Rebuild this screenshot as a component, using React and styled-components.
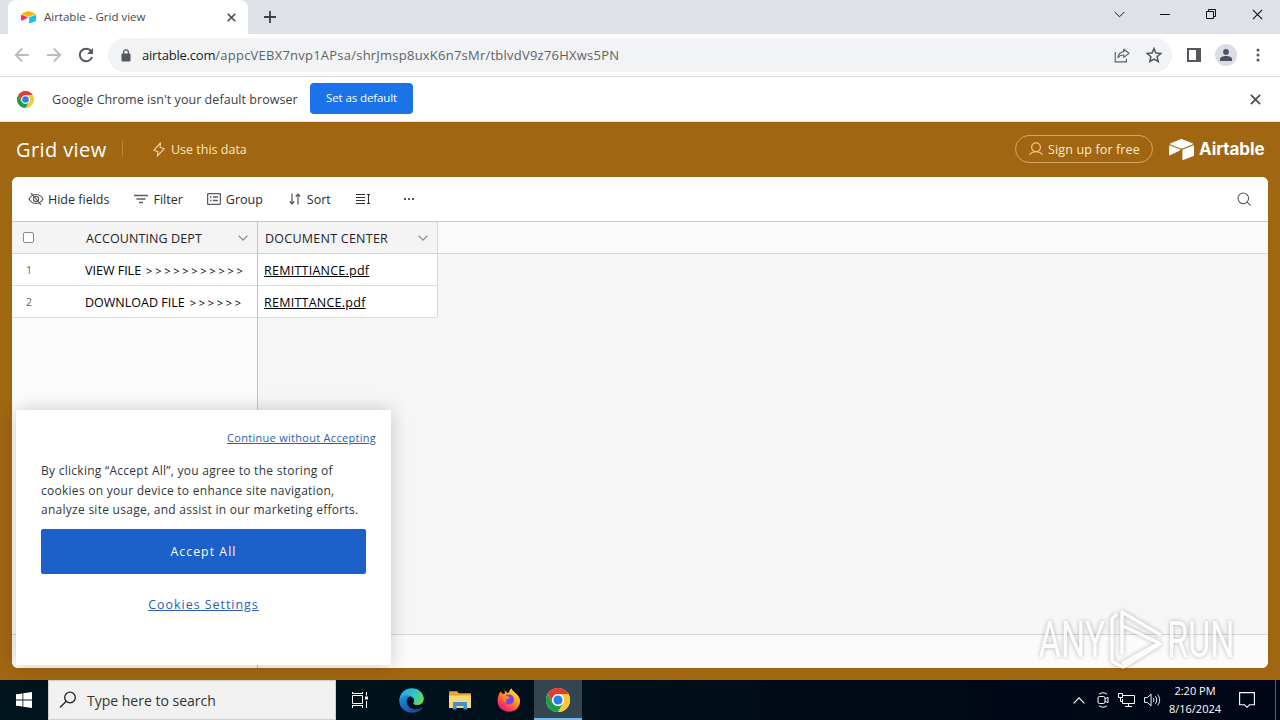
import React from 'react'
import styled, { createGlobalStyle } from 'styled-components'

const fields = [
    { id: 'dept', title: 'ACCOUNTING DEPT' },
    { id: 'doc', title: 'DOCUMENT CENTER' },
]

const records = [
    { id: 1, label: 'VIEW FILE', arrows: '>>>>>>>>>>>', file: 'REMITTIANCE.pdf' },
    { id: 2, label: 'DOWNLOAD FILE', arrows: '>>>>>>', file: 'REMITTANCE.pdf' },
]

const ChromeLogo = ({ size }) => (
    <svg width={size} height={size} viewBox="0 0 48 48">
        <circle cx="24" cy="24" r="24" fill="#fff" />
        <path d="M3.2 12A24 24 0 0 1 44.8 12H24a12 12 0 0 0-10.4 18z" fill="#e33b2e" />
        <path d="M44.8 12A24 24 0 0 1 24 48l10.4-18A12 12 0 0 0 24 12z" fill="#fcc934" />
        <path d="M24 48A24 24 0 0 1 3.2 12l10.4 18a12 12 0 0 0 20.8 0z" fill="#1e9e4a" />
        <circle cx="24" cy="24" r="11.8" fill="#fff" />
        <circle cx="24" cy="24" r="9.2" fill="#2f7de9" />
    </svg>
)

const AirtableMark = ({ width, top = '#fff', left = '#fff', right = '#fff' }) => (
    <svg width={width} height={width * 0.84} viewBox="0 0 25 21">
        <path d="M11.2.4 1.6 4.3c-.6.2-.6 1 0 1.2l9.6 3.8c.8.4 1.8.4 2.7 0l9.6-3.8c.5-.2.5-1 0-1.2L13.9.4c-.9-.4-1.9-.4-2.7 0z" fill={top} />
        <path d="M13.4 11v9.3c0 .5.4.8.9.6l10.2-4c.3-.1.5-.4.5-.6V7c0-.5-.5-.8-.9-.6l-10.2 4c-.3.1-.5.3-.5.6z" fill={right} />
        <path d="m11 11.5-3.2 1.5-6.7 3.3c-.4.2-1 0-1-.5V7.1c0-.6.7-.9 1.1-.7l9.7 3.9c.5.2.6.9.1 1.2z" fill={left} />
    </svg>
)

const Chevron = ({ width, height, weight = 1 }) => (
    <svg width={width} height={height} viewBox="0 0 10 6" fill="none" stroke="currentColor" strokeWidth={weight}>
        <path d="m.6.7 4.4 4.4L9.4.7" />
    </svg>
)

const Cross = ({ size, weight }) => (
    <svg width={size} height={size} viewBox="0 0 10 10" fill="none" stroke="currentColor" strokeWidth={weight}>
        <path d="m.8.8 8.4 8.4M9.2.8.8 9.2" />
    </svg>
)

const TabStrip = () => (
    <StyledTabStrip>
        <Tab>
            <AirtableMark width={15} top="#fcb400" left="#f82b60" right="#18bfff" />
            <TabTitle>Airtable - Grid view</TabTitle>
            <Cross size={9} weight={1.8} />
        </Tab>
        <NewTab>
            <svg width="12" height="12" viewBox="0 0 12 12" stroke="currentColor" strokeWidth="1.8">
                <path d="M6 0v12M0 6h12" />
            </svg>
        </NewTab>
        <WindowButtons>
            <WindowButton>
                <Chevron width={11} height={7} weight={0.9} />
            </WindowButton>
            <WindowButton>
                <svg width="10" height="10" viewBox="0 0 10 10" stroke="currentColor">
                    <path d="M0 5.5h10" />
                </svg>
            </WindowButton>
            <WindowButton>
                <svg width="10" height="10" viewBox="0 0 10 10" fill="none" stroke="currentColor">
                    <path d="M.5 2.5h7v7h-7zM2.5 2.5v-2h7v7h-2" />
                </svg>
            </WindowButton>
            <WindowButton>
                <Cross size={11} weight={1} />
            </WindowButton>
        </WindowButtons>
    </StyledTabStrip>
)

const AddressBar = () => (
    <StyledAddressBar>
        <NavIcon $muted>
            <svg width="16" height="16" viewBox="0 0 16 16" fill="none" stroke="currentColor" strokeWidth="1.8">
                <path d="M15 8H2M8.2 1.5 1.7 8l6.5 6.5" />
            </svg>
        </NavIcon>
        <NavIcon $muted>
            <svg width="16" height="16" viewBox="0 0 16 16" fill="none" stroke="currentColor" strokeWidth="1.8">
                <path d="M1 8h13M7.8 1.5 14.3 8l-6.5 6.5" />
            </svg>
        </NavIcon>
        <NavIcon>
            <svg width="16" height="16" viewBox="0 0 16 16" fill="none" stroke="currentColor" strokeWidth="2">
                <path d="M13.2 4.2A6.3 6.3 0 1 0 14.1 10" />
                <path d="M15 1v6H9z" fill="currentColor" stroke="none" />
            </svg>
        </NavIcon>
        <Omnibox>
            <svg width="10" height="13" viewBox="0 0 10 13" fill="none">
                <rect x=".5" y="4.5" width="9" height="8" rx="1" fill="#54585d" />
                <path d="M2.6 5V3.2a2.4 2.4 0 0 1 4.8 0V5" stroke="#54585d" strokeWidth="1.3" />
            </svg>
            <Url>
                <UrlHost>airtable.com</UrlHost>/appcVEBX7nvp1APsa/shrJmsp8uxK6n7sMr/tblvdV9z76HXws5PN
            </Url>
            <svg width="16" height="15" viewBox="0 0 16 15" fill="none" stroke="#5f6368" strokeWidth="1.2">
                <path d="M1.2 4v9.8h11.2v-3" />
                <path d="M9.8 1.2 15 5.3 9.8 9.4V7c-2.7-.1-4.5.7-5.8 2.7.3-3.2 2.2-5.5 5.8-6z" strokeLinejoin="round" />
            </svg>
            <svg width="16" height="16" viewBox="0 0 16 16" fill="none" stroke="#54585d" strokeWidth="1.5">
                <path d="m8 1.6 1.9 4.5 4.9.4-3.7 3.2 1.1 4.8L8 12l-4.2 2.5 1.1-4.8-3.7-3.2 4.9-.4z" />
            </svg>
        </Omnibox>
        <BrowserActions>
            <svg width="14" height="14" viewBox="0 0 14 14" fill="none" stroke="#54585d" strokeWidth="2">
                <path d="M1 1h12v12H1z" />
                <path d="M9 1h4v12H9z" fill="#54585d" stroke="none" />
            </svg>
            <Avatar>
                <svg width="12" height="12" viewBox="0 0 12 12" fill="#4c5163">
                    <circle cx="6" cy="2.9" r="2.9" />
                    <path d="M0 12v-1.8C0 8 3 7 6 7s6 1 6 3.2V12z" />
                </svg>
            </Avatar>
            <svg width="4" height="14" viewBox="0 0 4 14" fill="#54585d">
                <circle cx="2" cy="2" r="1.5" />
                <circle cx="2" cy="7" r="1.5" />
                <circle cx="2" cy="12" r="1.5" />
            </svg>
        </BrowserActions>
    </StyledAddressBar>
)

const GridToolbar = () => (
    <StyledGridToolbar>
        <ToolButton $gap={4} $after={25}>
            <svg width="16" height="14" viewBox="0 0 16 14" fill="none" stroke="currentColor" strokeWidth="1.2">
                <path d="M1 7c1.6-3 4-4.5 7-4.5S13.4 4 15 7c-1.6 3-4 4.5-7 4.5S2.6 10 1 7z" />
                <circle cx="8" cy="7" r="2.6" />
                <path d="m3 1.2 10 11.6" />
            </svg>
            <ToolLabel>Hide fields</ToolLabel>
        </ToolButton>
        <ToolButton $gap={5} $after={24}>
            <svg width="14" height="10" viewBox="0 0 14 10" stroke="currentColor" strokeWidth="1.3">
                <path d="M0 1.5h14M2.5 5h9M5 8.500h4" />
            </svg>
            <ToolLabel>Filter</ToolLabel>
        </ToolButton>
        <ToolButton $gap={5} $after={26}>
            <svg width="14" height="12" viewBox="0 0 14 12" fill="none" stroke="currentColor" strokeWidth="1.3">
                <rect x=".6" y=".6" width="12.8" height="10.8" rx="1" />
                <path d="M3 4h1.5M6 4h5M3 7.5h1.500M6 7.500h5" />
            </svg>
            <ToolLabel>Group</ToolLabel>
        </ToolButton>
        <ToolButton $gap={6} $after={25}>
            <svg width="12" height="12" viewBox="0 0 12 12" fill="none" stroke="currentColor" strokeWidth="1.3">
                <path d="M3 .5v10.3M.7 8.5 3 10.8l2.3-2.3M9 11.5V1.2M6.7 3.5 9 1.2l2.3 2.3" />
            </svg>
            <ToolLabel>Sort</ToolLabel>
        </ToolButton>
        <ToolButton $after={32} $dark>
            <svg width="15" height="12" viewBox="0 0 15 12" fill="none" stroke="currentColor">
                <path d="M0 1.5h9M0 4.5h9M0 7.5h9M0 10.5h9M12.5 1.5v9M11 1.5h3M11 10.5h3" />
            </svg>
        </ToolButton>
        <ToolButton $dark>
            <svg width="12" height="4" viewBox="0 0 12 4" fill="currentColor">
                <circle cx="2" cy="2" r="1.1" />
                <circle cx="6" cy="2" r="1.1" />
                <circle cx="10" cy="2" r="1.1" />
            </svg>
        </ToolButton>
        <SearchButton>
            <svg width="14" height="14" viewBox="0 0 14 14" fill="none" stroke="currentColor" strokeWidth="1.1">
                <circle cx="6.3" cy="6.3" r="5.3" />
                <path d="m10.2 10.2 3.4 3.4" />
            </svg>
        </SearchButton>
    </StyledGridToolbar>
)

const Grid = () => (
    <StyledGrid>
        <FrozenPane>
            <HeaderCell>
                <Checkbox />
                <FieldName>{fields[0].title}</FieldName>
                <Chevron width={10} height={6} weight={1.2} />
            </HeaderCell>
            {records.map(record => (
                <Row key={record.id}>
                    <RowNumber>{record.id}</RowNumber>
                    <span>{record.label}</span>
                    <Arrows>{record.arrows}</Arrows>
                </Row>
            ))}
        </FrozenPane>
        <ScrollPane>
            <HeaderStrip>
                <HeaderCell $scrolling>
                    <FieldName $wide>{fields[1].title}</FieldName>
                    <Chevron width={10} height={6} weight={1.2} />
                </HeaderCell>
            </HeaderStrip>
            {records.map(record => (
                <FileCell key={record.id}>
                    <FileLink>{record.file}</FileLink>
                </FileCell>
            ))}
        </ScrollPane>
    </StyledGrid>
)

const CookieBanner = () => (
    <StyledCookieBanner>
        <ContinueLink>Continue without Accepting</ContinueLink>
        <CookieText>
            By clicking “Accept All”, you agree to the storing of
            <br />
            cookies on your device to enhance site navigation,
            <br />
            analyze site usage, and assist in our marketing efforts.
        </CookieText>
        <AcceptButton>Accept All</AcceptButton>
        <SettingsLink>Cookies Settings</SettingsLink>
    </StyledCookieBanner>
)

const Watermark = () => (
    <StyledWatermark>
        <WatermarkWord>ANY</WatermarkWord>
        <PlayMark width="60" height="66" viewBox="0 0 60 66" fill="none" stroke="#fff" strokeWidth="3.5" strokeLinejoin="round" strokeLinecap="round">
            <path d="M6 54V13l4-4" />
            <path d="M16 47V6l38 22.5" />
            <path d="m17 20 36 17-36 20" />
            <path d="m7 56 10 5 37-23" />
        </PlayMark>
        <WatermarkWord>RUN</WatermarkWord>
    </StyledWatermark>
)

const EdgeLogo = () => (
    <svg width="25" height="25" viewBox="0 0 24 24">
        <defs>
            <linearGradient id="edgeTop" x1="0" y1=".3" x2="1" y2=".6">
                <stop offset="0" stopColor="#27a5e0" />
                <stop offset=".55" stopColor="#2fc3c9" />
                <stop offset="1" stopColor="#6edb57" />
            </linearGradient>
            <linearGradient id="edgeBody" x1="0" y1="0" x2=".4" y2="1">
                <stop offset="0" stopColor="#1b95dd" />
                <stop offset="1" stopColor="#1254a8" />
            </linearGradient>
        </defs>
        <path d="M.3 12.5C.3 5.5 5.5.3 12.2.3 19 .3 23.8 5 23.8 10.3c0 3.6-2.7 6-6 6-2.8 0-4.3-1-4-2 1.300-1.400 1.200-4.600-1.800-6C8 6.500 2.500 8 .3 12.500z" fill="url(#edgeTop)" />
        <path d="M.3 12.5C1.5 7.5 8 5.8 11.6 8.2 8.5 8.4 7 11 7.5 14c.6 4.2 5 7.3 9.5 6.5 2-.3 3.5-1 4.8-1.9.5-.3.9.1.6.6-2.1 3-5.9 4.6-9.9 4.6C5.5 23.8.3 18.6.3 12.5z" fill="url(#edgeBody)" />
    </svg>
)

const FolderIcon = () => (
    <svg width="22" height="19" viewBox="0 0 22 19">
        <path d="M0 1.5C0 .7.5.3 1.2.3H8l2 2h11c.6 0 1 .4 1 1V6H0z" fill="#e8a33d" />
        <path d="M0 4.5h22V17H0z" fill="#fbd775" />
        <path d="M4 18.5V12c0-.7.4-1 1-1h12c.6 0 1 .3 1 1v6.5h-3.500V15h-7v3.500z" fill="#3f92d2" />
    </svg>
)

const FirefoxLogo = () => (
    <svg width="24" height="24" viewBox="0 0 24 24">
        <defs>
            <linearGradient id="fox" x1=".85" y1=".05" x2=".2" y2=".95">
                <stop offset="0" stopColor="#fff04a" />
                <stop offset=".4" stopColor="#ff9a1f" />
                <stop offset=".75" stopColor="#ff4250" />
                <stop offset="1" stopColor="#e31587" />
            </linearGradient>
        </defs>
        <path d="M3.5 3.5 5.8 6 8 5.5l-.5-3.200 3.500 3C12.500 3.500 13 1.500 14.500.3c.5 2.200 2 3 4.500 5.200 3 2.700 4.500 5.500 4 9-.8 5.500-5.200 9.300-11 9.300S.8 19.500.6 13.500C.5 9.500 1.500 6 3.500 3.500z" fill="url(#fox)" />
        <circle cx="12" cy="11.5" r="5" fill="#7542e5" />
        <path d="M5.5 8.5c3-1.500 6 0 7.500 1.200-1 1-2.500.8-3.500 1.800-.6.7-.5 2 .6 2.700-3 .5-5-2.200-4.600-5.700z" fill="#ff8a2a" />
    </svg>
)

const Taskbar = () => (
    <StyledTaskbar>
        <TaskButton>
            <svg width="16" height="16" viewBox="0 0 16 16" fill="#fff">
                <path d="M0 2.3 6.5 1.4v6.2H0zM7.3 1.3 16 0v7.6H7.3zM0 8.4h6.5v6.2L0 13.7zM7.3 8.4H16V16l-8.7-1.3z" />
            </svg>
        </TaskButton>
        <TaskSearch>
            <svg width="18" height="18" viewBox="0 0 18 18" fill="none" stroke="#222" strokeWidth="1.3">
                <circle cx="11" cy="6.5" r="5.3" />
                <path d="M7.2 10.3 1 16.5" />
            </svg>
            <TaskSearchText>Type here to search</TaskSearchText>
        </TaskSearch>
        <TaskButton>
            <svg width="18" height="18" viewBox="0 0 18 18" fill="none" stroke="#fff">
                <path d="M1.5 4.5h10v8h-10zM1.5 1v2M11.5 1v2M1.5 2.5h10M1.5 14v3M11.5 14v3M1.5 14.5h10M15.5 1v3.5M15.5 10v7" />
                <path d="M14 5.5h3v3h-3z" fill="#fff" stroke="none" />
            </svg>
        </TaskButton>
        <TaskApps>
            <TaskButton>
                <EdgeLogo />
            </TaskButton>
            <TaskButton>
                <FolderIcon />
            </TaskButton>
            <TaskButton>
                <FirefoxLogo />
            </TaskButton>
            <TaskButton $active>
                <ChromeLogo size={24} />
            </TaskButton>
        </TaskApps>
        <Tray>
            <svg width="12" height="7" viewBox="0 0 12 7" fill="none" stroke="#fff" strokeWidth="1.2">
                <path d="m.6 6.3 5.4-5.4 5.4 5.4" />
            </svg>
            <svg width="12" height="16" viewBox="0 0 12 16" fill="none" stroke="#fff">
                <path d="M2 2.2C4.5.3 7.5.3 10 2.2M2 13.8c2.5 1.9 5.5 1.9 8 0" />
                <rect x="1" y="4.5" width="7" height="7" rx="1.5" />
                <path d="m8 7 3-1.7v5.4L8 9" />
            </svg>
            <svg width="17" height="14" viewBox="0 0 17 14" fill="none" stroke="#fff">
                <path d="M5 2.5h11.5v8h-12V6M10.5 10.5v3M7 13.5h7M.5.5h4v4h-4zM2.5 4.5v4h2" />
            </svg>
            <svg width="17" height="14" viewBox="0 0 18 14" fill="none" stroke="#fff">
                <path d="M.5 4.5h3l4-3.7v12.4l-4-3.7h-3zM9.7 4.8c1 1.2 1 3.2 0 4.4M12 3c2 2.2 2 5.8 0 8M14.3 1.2c3 3.3 3 8.3 0 11.6" />
            </svg>
            <Clock>
                <span>2:20 PM</span>
                <span>8/16/2024</span>
            </Clock>
            <svg width="16" height="16" viewBox="0 0 16 16" fill="none" stroke="#fff" strokeWidth="1.1">
                <path d="M.6.6h14.8v12.2h-4.9L8 15.3l-2.5-2.5H.6z" />
            </svg>
            <ShowDesktop />
        </Tray>
    </StyledTaskbar>
)

const App = () => (
    <Screen>
        <GlobalStyle />
        <TabStrip />
        <AddressBar />
        <InfoBar>
            <ChromeLogo size={17} />
            <InfoText>Google Chrome isn&apos;t your default browser</InfoText>
            <DefaultButton>Set as default</DefaultButton>
            <InfoClose>
                <Cross size={11} weight={1.8} />
            </InfoClose>
        </InfoBar>
        <Page>
            <PageHeader>
                <ViewTitle>Grid view</ViewTitle>
                <UseData>
                    <svg width="12" height="15" viewBox="0 0 12 15" fill="none" stroke="#ffd9a0" strokeWidth="1.1" strokeLinejoin="round">
                        <path d="M7.5.8.8 8.3 5 9.8l-.8 4.4 7-7.4L7 5.3z" />
                    </svg>
                    Use this data
                </UseData>
                <SignUp>
                    <svg width="14" height="14" viewBox="0 0 14 14" fill="none" stroke="#f0c283" strokeWidth="1.2">
                        <circle cx="7" cy="5.3" r="4.4" />
                        <path d="M.6 13c1.2-2.2 3.2-3.3 6.4-3.3s5.2 1.1 6.4 3.3" />
                    </svg>
                    Sign up for free
                </SignUp>
                <Brand>
                    <AirtableMark width={25} />
                    Airtable
                </Brand>
            </PageHeader>
            <Panel>
                <GridToolbar />
                <Grid />
                <Summary>
                    <SummaryDivider />
                </Summary>
            </Panel>
            <CookieBanner />
            <Watermark />
        </Page>
        <Taskbar />
    </Screen>
)

const GlobalStyle = createGlobalStyle`
    *, *::before, *::after {
        box-sizing: border-box;
    }
    body {
        margin: 0;
        overflow: hidden;
    }
    svg {
        display: block;
        flex: none;
    }
    button {
        font: inherit;
        letter-spacing: inherit;
        border: 0;
        padding: 0;
        background: none;
    }
`

const Screen = styled.div`
    width: 1280px;
    height: 720px;
    display: flex;
    flex-direction: column;
    font-family: 'Open Sans', 'Noto Sans', sans-serif;
    font-size: 12.5px;
    line-height: 1.2;
    white-space: nowrap;
    overflow: hidden;
`

const StyledTabStrip = styled.div`
    height: 34px;
    padding-left: 8px;
    display: flex;
    background: #dee1e8;
`

const Tab = styled.div`
    width: 240px;
    padding: 0 12px 0 13px;
    display: flex;
    align-items: center;
    border-radius: 8px 8px 0 0;
    background: #fff;
    color: #45494d;
`

const TabTitle = styled.span`
    flex: 1;
    margin-left: 8px;
    font-size: 11.5px;
`

const NewTab = styled.button`
    width: 44px;
    display: grid;
    place-items: center;
    color: #3c4043;
`

const WindowButtons = styled.div`
    margin-left: auto;
    padding-bottom: 6px;
    display: flex;
`

const WindowButton = styled.button`
    width: 46px;
    display: grid;
    place-items: center;
    color: #111;
`

const StyledAddressBar = styled.div`
    height: 43px;
    padding: 0 20px 0 14px;
    display: flex;
    align-items: center;
    border-bottom: 1px solid #d9dadd;
    background: #fff;
`

const NavIcon = styled.button`
    margin-right: 16px;
    color: ${props => (props.$muted ? '#babcbe' : '#54585d')};
`

const Omnibox = styled.div`
    height: 34px;
    width: 1064px;
    margin-left: -2px;
    padding: 0 10px 0 13px;
    display: flex;
    align-items: center;
    gap: 16px;
    border-radius: 17px;
    background: #f1f3f4;
`

const Url = styled.span`
    flex: 1;
    margin-left: -5px;
    padding-top: 1px;
    font-size: 13px;
    letter-spacing: 0.23px;
    color: #5f6368;
`

const UrlHost = styled.span`
    letter-spacing: -0.2px;
    color: #202124;
`

const BrowserActions = styled.div`
    margin-left: auto;
    display: flex;
    align-items: center;
    gap: 14px;
`

const Avatar = styled.div`
    width: 22px;
    height: 22px;
    margin-right: 5px;
    display: grid;
    place-items: center;
    border-radius: 50%;
    background: #dadde6;
`

const InfoBar = styled.div`
    height: 45px;
    padding: 0 19px 0 17px;
    display: flex;
    align-items: center;
    border-bottom: 1px solid #e8e1d4;
    background: #fff;
`

const InfoText = styled.span`
    width: 258px;
    margin-left: 18px;
    letter-spacing: 0.05px;
    color: #3c4043;
`

const DefaultButton = styled.button`
    width: 103px;
    height: 31px;
    margin-bottom: 1px;
    padding-bottom: 1px;
    border-radius: 4px;
    background: #1a73e8;
    color: #fff;
    font-size: 11.5px;
    letter-spacing: -0.1px;
`

const InfoClose = styled.button`
    margin-left: auto;
    color: #54585d;
`

const Page = styled.main`
    position: relative;
    height: 558px;
    padding: 0 12px 12px;
    display: flex;
    flex-direction: column;
    background: #a16611;
`

const PageHeader = styled.header`
    height: 55px;
    padding: 0 4px 1px;
    display: flex;
    align-items: center;
    color: #fff1dc;
`

const ViewTitle = styled.h1`
    width: 107px;
    height: 16px;
    margin: 0;
    font-size: 20px;
    font-weight: 400;
    line-height: 18px;
    letter-spacing: 0.4px;
    color: #fff;
    border-right: 1px solid #c08a3c;
`

const UseData = styled.button`
    margin-left: 30px;
    display: flex;
    align-items: center;
    gap: 6px;
    color: #ffe6bf;
`

const SignUp = styled.button`
    width: 138px;
    height: 28px;
    margin-left: auto;
    padding-left: 1px;
    display: flex;
    align-items: center;
    justify-content: center;
    gap: 5px;
    border: 1px solid #d5a662;
    border-radius: 14px;
    color: #ffeccb;
    letter-spacing: 0.13px;
`

const Brand = styled.div`
    width: 95px;
    margin-left: 16px;
    display: flex;
    align-items: center;
    gap: 5px;
    font-family: Inter, sans-serif;
    font-size: 17px;
    font-weight: 700;
    letter-spacing: -0.1px;
    color: #fff;
`

const Panel = styled.section`
    flex: 1;
    display: flex;
    flex-direction: column;
    border-radius: 6px;
    background: #f6f6f6;
    overflow: hidden;
`

const StyledGridToolbar = styled.div`
    height: 45px;
    padding: 0 17px 0 16px;
    display: flex;
    align-items: center;
    border-bottom: 1px solid #c8c8c8;
    background: #fff;
`

const ToolButton = styled.button`
    margin-right: ${props => props.$after || 0}px;
    display: flex;
    align-items: center;
    gap: ${props => props.$gap || 0}px;
    color: ${props => (props.$dark ? '#2a2c30' : '#5a5d62')};
`

const ToolLabel = styled.span`
    color: #2a2c30;
`

const SearchButton = styled.button`
    margin-left: auto;
    color: #55585c;
`

const StyledGrid = styled.div`
    flex: 1;
    display: flex;
    color: #000;
`

const FrozenPane = styled.div`
    width: 246px;
    border-right: 1px solid #c4c4c4;
    background: #fcfcfc;
`

const ScrollPane = styled.div`
    flex: 1;
`

const HeaderStrip = styled.div`
    height: 32px;
    background: #fbfbfb;
    border-bottom: 1px solid #d6d6d6;
`

const HeaderCell = styled.div`
    width: ${props => (props.$scrolling ? '180px' : 'auto')};
    height: ${props => (props.$scrolling ? '31px' : '32px')};
    padding: ${props => (props.$scrolling ? '0 9px 0 7px' : '0 9px 0 11px')};
    display: flex;
    align-items: center;
    border: 0 solid #d6d6d6;
    border-width: ${props => (props.$scrolling ? '0 1px 0 0' : '0 0 1px')};
    background: #f4f4f4;
    color: #85888c;
`

const Checkbox = styled.span`
    width: 11px;
    height: 11px;
    margin-right: 52px;
    border: 1px solid #8a8a8a;
    border-radius: 2px;
    background: #fff;
`

const FieldName = styled.span`
    flex: 1;
    padding-top: 2px;
    letter-spacing: ${props => (props.$wide ? 0.25 : 0.1)}px;
    color: #222427;
`

const Row = styled.div`
    height: 32px;
    padding-top: 2px;
    display: flex;
    align-items: center;
    border-bottom: 1px solid #dcdcdc;
    background: #fff;
`

const RowNumber = styled.span`
    width: 73px;
    padding-left: 14px;
    font-size: 10.5px;
    color: #606367;
`

const Arrows = styled.span`
    margin-left: 5px;
    font-size: 11px;
    letter-spacing: 2.75px;
`

const FileCell = styled.div`
    width: 180px;
    height: 32px;
    padding: 2px 0 0 6px;
    display: flex;
    align-items: center;
    border: 0 solid #dcdcdc;
    border-width: 0 1px 1px 0;
    background: #fff;
`

const FileLink = styled.span`
    letter-spacing: 0.25px;
    text-decoration: underline;
`

const Summary = styled.div`
    height: 34px;
    border-top: 1px solid #d6d6d6;
    background: #fbfbfb;
`

const SummaryDivider = styled.div`
    width: 246px;
    height: 100%;
    border-right: 1px solid #c4c4c4;
`

const StyledCookieBanner = styled.aside`
    position: absolute;
    left: 16px;
    bottom: 15px;
    width: 375px;
    height: 255px;
    padding: 20px 25px;
    display: flex;
    flex-direction: column;
    align-items: center;
    background: #fff;
    box-shadow: 0 0 18px rgba(0, 0, 0, 0.2);
`

const ContinueLink = styled.a`
    align-self: flex-end;
    height: 16px;
    margin-right: -10px;
    font-size: 11px;
    line-height: 16px;
    letter-spacing: 0.29px;
    text-decoration: underline;
    color: #2a5db5;
`

const CookieText = styled.p`
    align-self: flex-start;
    margin: 15px 0 9px;
    font-size: 12px;
    line-height: 19.5px;
    letter-spacing: 0.27px;
    color: #33363b;
`

const AcceptButton = styled.button`
    width: 325px;
    height: 45px;
    padding-top: 2px;
    flex: none;
    border-radius: 2px;
    background: #1b61c9;
    color: #fff;
    font-size: 12.2px;
    letter-spacing: 1.1px;
`

const SettingsLink = styled.a`
    margin-top: 23px;
    font-size: 12.5px;
    letter-spacing: 0.95px;
    text-decoration: underline;
    color: #2a5db5;
`

const StyledWatermark = styled.div`
    position: absolute;
    right: 42px;
    bottom: 6px;
    display: flex;
    align-items: center;
    opacity: 0.72;
    filter: drop-shadow(0 0 2px rgba(0, 0, 0, 0.4));
`

const PlayMark = styled.svg`
    margin: 0 -2px 2px -3px;
`

const WatermarkWord = styled.span`
    width: 74px;
    display: flex;
    justify-content: center;
    font-family: Roboto, sans-serif;
    font-size: 50px;
    line-height: 60px;
    color: #fff;
    transform: scaleX(0.68);
`

const StyledTaskbar = styled.footer`
    height: 40px;
    display: flex;
    background: linear-gradient(90deg, #00151d, #000d18 60%, #000616);
`

const TaskButton = styled.button`
    width: 48px;
    height: 40px;
    display: grid;
    place-items: center;
    background: ${props => (props.$active ? '#33454e' : 'none')};
    box-shadow: ${props => (props.$active ? 'inset 0 -2px #76b9ed' : 'none')};
`

const TaskSearch = styled.div`
    width: 288px;
    padding-left: 10px;
    display: flex;
    align-items: center;
    gap: 10px;
    border: 1px solid #cfcfcf;
    background: #f1f1f1;
    color: #333;
    font-size: 14px;
`

const TaskSearchText = styled.span`
    padding-top: 2px;
`

const TaskApps = styled.div`
    margin-left: 3px;
    display: flex;
    gap: 1px;
`

const Tray = styled.div`
    margin-left: auto;
    display: flex;
    align-items: center;
    gap: 9px;

    > svg:first-child {
        margin-right: 3px;
    }
`

const Clock = styled.time`
    width: 54px;
    margin: 0 8px 0 -2px;
    display: flex;
    flex-direction: column;
    align-items: center;
    font-size: 11px;
    line-height: 18px;
    color: #fff;
`

const ShowDesktop = styled.span`
    width: 5px;
    height: 40px;
    margin-left: 11px;
    border-left: 1px solid #5b626c;
`

export default App
